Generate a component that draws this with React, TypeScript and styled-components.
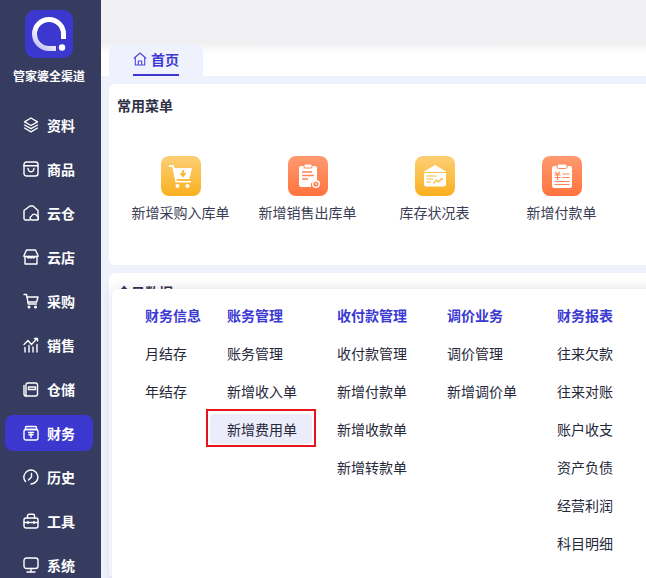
import React from 'react';
import styled, { createGlobalStyle } from 'styled-components';

const GlobalStyle = createGlobalStyle`
  html, body {
    margin: 0;
    padding: 0;
    height: 100%;
    overflow: hidden;
    font-family: "Noto Sans CJK SC", "Liberation Sans", sans-serif;
  }
  * { box-sizing: border-box; }
`;

const Page = styled.div`
  display: flex;
  width: 646px;
  height: 578px;
  overflow: hidden;
  background: #eff2fd;
`;

const Sidebar = styled.aside`
  flex: 0 0 101px;
  height: 578px;
  padding: 10px 3px 0 0;
  background: #363c60;
  display: flex;
  flex-direction: column;
  align-items: center;
  overflow: hidden;
`;

const Logo = styled.div`
  width: 48px;
  height: 48px;
  flex: none;
`;

const Brand = styled.div`
  margin-top: 8px;
  margin-bottom: 21px;
  height: 20px;
  line-height: 20px;
  color: #fff;
  font-size: 12px;
  font-weight: 700;
  white-space: nowrap;
`;

const NavList = styled.nav`
  width: 100%;
  display: flex;
  flex-direction: column;
  gap: 8px;
  padding-left: 5px;
  flex: none;
`;

const NavItem = styled.div<{ $active?: boolean }>`
  width: 88px;
  height: 36px;
  padding-left: 18px;
  border-radius: 8px;
  display: flex;
  align-items: center;
  gap: 8px;
  flex: none;
  color: #fff;
  font-size: 14px;
  font-weight: 700;
  background: ${(p) => (p.$active ? '#3c37cf' : 'transparent')};
  svg { flex: none; }
`;

const Main = styled.main`
  flex: 1;
  min-width: 0;
  position: relative;
  display: flex;
  flex-direction: column;
`;

const TopBar = styled.div`
  height: 44px;
  background: #f0f0f2;
  flex: none;
`;

const TabBar = styled.div`
  height: 32px;
  flex: none;
  padding-left: 8px;
  background: linear-gradient(#f2f2f4 0, #fff 10px);
`;

const Tab = styled.div`
  width: 94px;
  height: 32px;
  border-radius: 8px 8px 0 0;
  background: #eff2fd;
  display: flex;
  justify-content: center;
`;

const TabLabel = styled.div`
  height: 32px;
  width: 46px;
  display: flex;
  align-items: center;
  gap: 4px;
  color: #3c3ad2;
  font-size: 14px;
  font-weight: 700;
  border-bottom: 2px solid #3c37cf;
`;

const Card = styled.section`
  margin: 8px 0 0 8px;
  padding: 10px 0 0 8px;
  background: #fff;
  border-radius: 6px 0 0 6px;
`;

const MenuCard = styled(Card)`
  height: 181px;
  flex: none;
`;

const DataCard = styled(Card)`
  flex: 1;
  padding-top: 8px;
`;

const CardTitle = styled.h3`
  margin: 0;
  height: 22px;
  line-height: 22px;
  font-size: 14px;
  font-weight: 700;
  color: #2e3146;
`;

const Shortcuts = styled.div`
  margin-top: 40px;
  display: grid;
  grid-template-columns: repeat(4, 127px);
`;

const Shortcut = styled.div`
  display: flex;
  flex-direction: column;
  align-items: center;
`;

const ShortcutIcon = styled.div<{ $tone: 'amber' | 'coral' }>`
  width: 40px;
  height: 40px;
  border-radius: 8px;
  display: flex;
  align-items: center;
  justify-content: center;
  background: ${(p) =>
    p.$tone === 'amber'
      ? 'linear-gradient(#fdcf76, #fab01f)'
      : 'linear-gradient(#ff9a70, #ff733d)'};
`;

const ShortcutLabel = styled.div`
  margin-top: 6px;
  height: 20px;
  line-height: 20px;
  font-size: 14px;
  color: #3b3d55;
  white-space: nowrap;
`;

const Popover = styled.div`
  position: absolute;
  left: 11px;
  top: 289px;
  width: 560px;
  height: 320px;
  padding: 11px 0 0 33px;
  background: #fff;
  border-radius: 6px 0 0 0;
  box-shadow: 0 0 12px rgba(50, 50, 110, 0.15);
  display: flex;
`;

const Column = styled.div<{ $width: number }>`
  flex: 0 0 ${(p) => p.$width}px;
  min-width: 0;
  display: flex;
  flex-direction: column;
  gap: 8px;
`;

const ColumnHead = styled.div`
  height: 30px;
  padding-top: 5px;
  line-height: 20px;
  color: #3c3ad2;
  font-size: 14px;
  font-weight: 700;
  white-space: nowrap;
`;

const MenuLink = styled.div<{ $selected?: boolean }>`
  position: relative;
  height: 30px;
  width: 102px;
  margin-left: -17px;
  padding-left: 17px;
  line-height: 30px;
  font-size: 14px;
  color: #26283a;
  white-space: nowrap;
  border-radius: 4px;
  background: ${(p) => (p.$selected ? '#ecedfb' : 'transparent')};
`;

const RedMark = styled.span`
  position: absolute;
  top: -5px;
  right: -4px;
  bottom: -3px;
  left: -4px;
  border: 2px solid #e5141d;
`;

const stroke = { fill: 'none', stroke: '#fff', strokeWidth: 1.4, strokeLinejoin: 'round', strokeLinecap: 'round' } as const;

const Svg = ({ children }: { children: React.ReactNode }) => (
  <svg width={16} height={16} viewBox="0 0 16 16" {...stroke}>
    {children}
  </svg>
);

const navItems: { label: string; icon: React.ReactNode; active?: boolean }[] = [
  {
    label: '资料',
    icon: (
      <Svg>
        <path d="M8 1 14.5 4.8 8 8.5 1.5 4.8Z" />
        <path d="M1.5 8 8 11.7 14.5 8" />
        <path d="M1.5 11 8 14.8 14.5 11" />
      </Svg>
    )
  },
  {
    label: '商品',
    icon: (
      <Svg>
        <rect x="1" y="1" width="14" height="14" rx="2.5" />
        <path d="M1 4.8h14" />
        <path d="M5 7.500c.4 2.400 1.500 3.300 3 3.300s2.600-.9 3-3.300" />
      </Svg>
    )
  },
  {
    label: '云仓',
    icon: (
      <Svg>
        <path d="M7 15H2.500A1.500 1.500 0 0 1 1 13.500V5.500L7 1h3l5 4.500v8" />
        <path d="M9 15a2 2 0 0 1-.5-3.900 2.800 2.800 0 0 1 5.300-.2A2 2 0 0 1 14 15Z" />
      </Svg>
    )
  },
  {
    label: '云店',
    icon: (
      <Svg>
        <path d="M3.500 1h9L15 6.500v1H1v-1Z" />
        <path d="M2 7.500V15h12V7.500" />
        <path d="M4 7.500c.8 2 2 2 2.700 0 .7 2 1.900 2 2.600 0 .7 2 1.900 2 2.700 0" />
      </Svg>
    )
  },
  {
    label: '采购',
    icon: (
      <Svg>
        <path d="M1 1.500h2.600L5.200 11h8.200" />
        <path d="M3.900 4H15l-1.400 5H4.800" />
        <circle cx="6" cy="14" r=".8" />
        <circle cx="12.500" cy="14" r=".8" />
      </Svg>
    )
  },
  {
    label: '销售',
    icon: (
      <Svg>
        <path d="M1 7.500 5 3.500l3.500 4L14 1.500" />
        <path d="M11.500 1.500H14.500V4" />
        <path d="M2 10.500V15M6 8.500V15M10 10V15M14 7.500V15" />
      </Svg>
    )
  },
  {
    label: '仓储',
    icon: (
      <Svg>
        <path d="M3 15h9.500a2 2 0 0 0 2-2V4a2 2 0 0 0-2-2H5a2 2 0 0 0-2 2Z" />
        <path d="M1 4.500V13a2 2 0 0 0 2 2" />
        <path d="M5.500 6h7v2.500h-7Z" />
      </Svg>
    )
  },
  {
    label: '财务',
    active: true,
    icon: (
      <Svg>
        <rect x="1" y="4.500" width="14" height="10.500" rx="2" />
        <path d="M3.500 1.500h9a1 1 0 0 1 1 1v2h-11v-2a1 1 0 0 1 1-1Z" />
        <path d="M5.500 7.500h5M8 7.500v5M6 9.700h4" />
      </Svg>
    )
  },
  {
    label: '历史',
    icon: (
      <Svg>
        <path d="M2.500 12.500A7 7 0 1 1 8 15" />
        <path d="M8.500 4.500V8L5.500 11" />
      </Svg>
    )
  },
  {
    label: '工具',
    icon: (
      <Svg>
        <rect x="1" y="5" width="14" height="10" rx="2" />
        <path d="M4.500 5V2.800a1.500 1.500 0 0 1 1.500-1.500h4a1.500 1.500 0 0 1 1.500 1.500V5" />
        <path d="M1 9.500h14M5 8.500v2M11 8.500v2" />
      </Svg>
    )
  },
  {
    label: '系统',
    icon: (
      <Svg>
        <rect x="1" y="1" width="14" height="10.500" rx="2.500" />
        <path d="M8 11.500V15M4 15h8" />
      </Svg>
    )
  }
];

const shortcuts: { label: string; tone: 'amber' | 'coral'; icon: React.ReactNode }[] = [
  {
    label: '新增采购入库单',
    tone: 'amber',
    icon: (
      <svg width="24" height="24" viewBox="0 0 24 24">
        <path d="M0 1h4.500l1 3H23l-2.500 11H7.500l.4 2H22v1.500H6.500L3.300 3H0Z" fill="#fff" />
        <circle cx="8.500" cy="22" r="2" fill="#fff" />
        <circle cx="18.500" cy="22" r="2" fill="#fff" />
        <path d="M14 6v5M11.500 9l2.500 3 2.500-3" fill="none" stroke="#fbb62e" strokeWidth="1.800" />
      </svg>
    )
  },
  {
    label: '新增销售出库单',
    tone: 'coral',
    icon: (
      <svg width="24" height="24" viewBox="0 0 24 24">
        <path d="M3 4a2 2 0 0 1 2-2h14a2 2 0 0 1 2 2v12.500a5 5 0 0 0-6 6.500H5a2 2 0 0 1-2-2Z" fill="#fff" />
        <rect x="8" y="0" width="8" height="4" rx="1" fill="#fff" stroke="#ff8455" strokeWidth="1" />
        <path d="M6 8h10M6 11.500h12M6 15h6" stroke="#ff8455" strokeWidth="1.300" />
        <circle cx="20" cy="20" r="3.300" fill="none" stroke="#fff" strokeWidth="1.500" />
        <path d="M20 18.500v1.500l1 1" stroke="#fff" strokeWidth="1" fill="none" />
      </svg>
    )
  },
  {
    label: '库存状况表',
    tone: 'amber',
    icon: (
      <svg width="24" height="24" viewBox="0 0 24 24">
        <path d="M1 7.500 12 1l11 6.500V8H1Z" fill="#fff" />
        <path d="M1 9h22v11.500a2 2 0 0 1-2 2H3a2 2 0 0 1-2-2Z" fill="#fff" />
        <path d="M3.500 12h10M3.500 15h7M3.500 18h4.500" stroke="#fbbb3d" strokeWidth="1.200" />
        <path d="M10.500 19.500l3-3.500 2 2 3-3.500 1.500 1" stroke="#fbbb3d" strokeWidth="1.200" fill="none" />
      </svg>
    )
  },
  {
    label: '新增付款单',
    tone: 'coral',
    icon: (
      <svg width="24" height="24" viewBox="0 0 24 24">
        <rect x="2" y="2" width="20" height="22" rx="2" fill="#fff" />
        <rect x="7" y="0" width="10" height="4.500" rx="1.500" fill="#fff" stroke="#ff8455" strokeWidth="1" />
        <path d="M5 8l2.500 2.500L10 8M4.500 11h6M4.500 13.500h6M7.500 10.500V16" stroke="#ff8455" strokeWidth="1.100" fill="none" />
        <path d="M12.500 10h7M12.500 13.500h7M4.500 17.500h15M4.500 20.500h15" stroke="#ff8455" strokeWidth="1.200" />
      </svg>
    )
  }
];

const columns: { head: string; width: number; links: string[] }[] = [
  { head: '财务信息', width: 82, links: ['月结存', '年结存'] },
  { head: '账务管理', width: 110, links: ['账务管理', '新增收入单', '新增费用单'] },
  { head: '收付款管理', width: 110, links: ['收付款管理', '新增付款单', '新增收款单', '新增转款单'] },
  { head: '调价业务', width: 110, links: ['调价管理', '新增调价单'] },
  { head: '财务报表', width: 110, links: ['往来欠款', '往来对账', '账户收支', '资产负债', '经营利润', '科目明细'] }
];

const App = () => (
  <Page>
    <GlobalStyle />
    <Sidebar>
      <Logo>
        <svg width="48" height="48" viewBox="0 0 48 48">
          <defs>
            <linearGradient id="ring" x1="0" y1="1" x2="0.700" y2="0">
              <stop offset="0" stopColor="#b9b8ee" />
              <stop offset="0.550" stopColor="#fff" />
            </linearGradient>
          </defs>
          <rect width="48" height="48" rx="10" fill="#3c37cf" />
          <path
            d="M31 38.500H24A14.500 14.500 0 1 1 38.500 24V29"
            fill="none"
            stroke="url(#ring)"
            strokeWidth="5"
          />
          <circle cx="37" cy="37.500" r="3.200" fill="#fff" />
        </svg>
      </Logo>
      <Brand>管家婆全渠道</Brand>
      <NavList>
        {navItems.map((item) => (
          <NavItem key={item.label} $active={item.active}>
            {item.icon}
            <span>{item.label}</span>
          </NavItem>
        ))}
      </NavList>
    </Sidebar>
    <Main>
      <TopBar />
      <TabBar>
        <Tab>
          <TabLabel>
            <svg width="14" height="14" viewBox="0 0 14 14" fill="none" stroke="#4a48d6" strokeWidth="1.100" strokeLinejoin="round">
              <path d="M.8 6.500 7 1l6.200 5.500" />
              <path d="M2.300 5.500V13h9.400V5.500" />
              <path d="M5.300 13V9h3.400v4" />
            </svg>
            <span>首页</span>
          </TabLabel>
        </Tab>
      </TabBar>
      <MenuCard>
        <CardTitle>常用菜单</CardTitle>
        <Shortcuts>
          {shortcuts.map((s) => (
            <Shortcut key={s.label}>
              <ShortcutIcon $tone={s.tone}>{s.icon}</ShortcutIcon>
              <ShortcutLabel>{s.label}</ShortcutLabel>
            </Shortcut>
          ))}
        </Shortcuts>
      </MenuCard>
      <DataCard>
        <CardTitle>今日数据</CardTitle>
      </DataCard>
      <Popover>
        {columns.map((col) => (
          <Column key={col.head} $width={col.width}>
            <ColumnHead>{col.head}</ColumnHead>
            {col.links.map((link) => (
              <MenuLink key={link} $selected={link === '新增费用单'}>
                {link}
                {link === '新增费用单' && <RedMark />}
              </MenuLink>
            ))}
          </Column>
        ))}
      </Popover>
    </Main>
  </Page>
);

export default App;
